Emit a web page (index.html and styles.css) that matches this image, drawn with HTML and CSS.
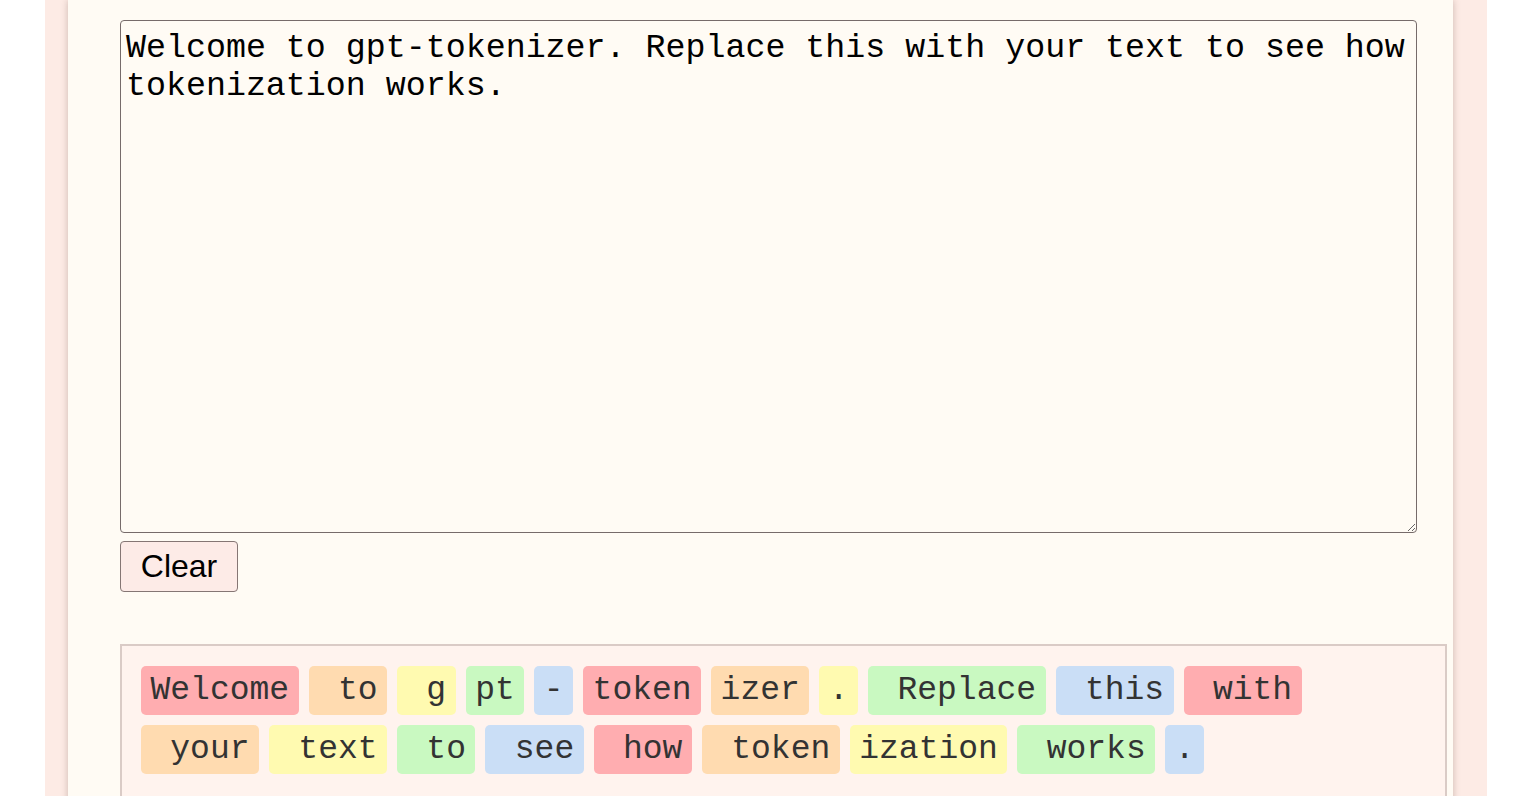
FILE: index.html
```html
<!DOCTYPE html>
<html>
<head>
<meta charset="utf-8">
<title>gpt-tokenizer</title>
<link rel="stylesheet" href="styles.css">
</head>
<body>
<div class="page">
  <main class="container">
    <textarea class="input" spellcheck="false">Welcome to gpt-tokenizer. Replace this with your text to see how tokenization works.</textarea>
    <div><button class="clear">Clear</button></div>
    <div class="tokens">
      <span class="tok c0">Welcome</span><span class="tok c1"> to</span><span class="tok c2"> g</span><span class="tok c3">pt</span><span class="tok c4">-</span><span class="tok c0">token</span><span class="tok c1">izer</span><span class="tok c2">.</span><span class="tok c3"> Replace</span><span class="tok c4"> this</span><span class="tok c0"> with</span><span class="tok c1"> your</span><span class="tok c2"> text</span><span class="tok c3"> to</span><span class="tok c4"> see</span><span class="tok c0"> how</span><span class="tok c1"> token</span><span class="tok c2">ization</span><span class="tok c3"> works</span><span class="tok c4">.</span>
    </div>
  </main>
</div>
</body>
</html>
```

FILE: styles.css
```css
html, body {
  margin: 0;
  padding: 0;
  background: #ffffff;
  height: 100%;
  overflow: hidden;
}
.page {
  margin-left: 45px;
  width: 1442px;
  min-height: 796px;
  background: #fdebe5;
}
.container {
  margin-left: 23px;
  width: 1333px;
  min-height: 776px;
  padding: 20px 0 0 52px;
  background: #fffbf4;
  box-shadow: 0 0 7px rgba(80, 50, 40, 0.28);
}
.input {
  display: block;
  box-sizing: border-box;
  width: 1297px;
  height: 513px;
  margin: 0;
  padding: 8px 5px 4px;
  border: 1.5px solid #766b6a;
  border-radius: 4px;
  background: #fffbf4;
  color: #000;
  font-family: "Liberation Mono", "Courier New", monospace;
  font-size: 33.3px;
  line-height: 38px;
  resize: both;
  outline: none;
}
.clear {
  box-sizing: border-box;
  margin-top: 8px;
  width: 118px;
  height: 51px;
  padding: 0;
  border: 1.5px solid #857674;
  border-radius: 4px;
  background: #fdebe7;
  color: #000;
  font-family: "Liberation Sans", Arial, sans-serif;
  font-size: 32px;
}
.tokens {
  box-sizing: border-box;
  width: 1327px;
  margin-top: 52px;
  min-height: 220px;
  padding: 20px 60px 20px 19px;
  border: 2px solid #dacbc6;
  background: #fff3ee;
  display: flex;
  flex-wrap: wrap;
  gap: 10px;
  align-content: flex-start;
}
.tok {
  white-space: pre;
  font-family: "Liberation Mono", "Courier New", monospace;
  font-size: 33px;
  line-height: 37px;
  padding: 6px 9.5px;
  border-radius: 5px;
  color: #333;
}
.c0 { background: #ffadb0; }
.c1 { background: #ffdbb0; }
.c2 { background: #fffab0; }
.c3 { background: #c9f9c1; }
.c4 { background: #cadef6; }
```
